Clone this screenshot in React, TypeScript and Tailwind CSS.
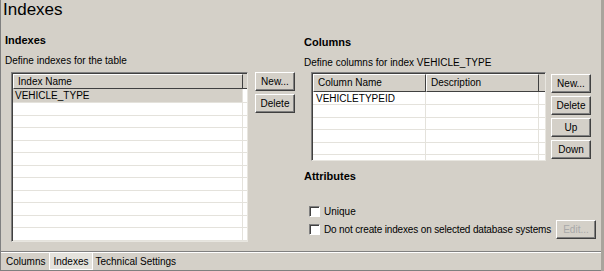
import React from "react";

const font = { fontFamily: '"Liberation Sans", Arial, sans-serif' };

function Btn({ label, disabled }: { label: string; disabled?: boolean }) {
  return (
    <div
      className={`w-[40px] h-[19px] flex items-center justify-center text-[10px] border border-t-white border-l-white border-r-[#404040] border-b-[#404040] shadow-[inset_-1px_-1px_0_#808080] ${
        disabled ? "text-[#a8a8a8]" : "text-black"
      }`}
    >
      {label}
    </div>
  );
}

function CheckBox() {
  return (
    <div className="w-[11px] h-[11px] shrink-0 bg-white border border-t-[#808080] border-l-[#808080] border-r-white border-b-white shadow-[inset_1px_1px_0_#404040]" />
  );
}

export default function App() {
  const leftRows = Array.from({ length: 11 });
  const rightRows = Array.from({ length: 5 });
  return (
    <div
      style={font}
      className="w-[604px] h-[271px] bg-[#d4d0c8] border-l border-l-[#808080] border-r-[3px] border-r-[#a8a49c] flex flex-col text-black overflow-hidden whitespace-nowrap"
    >
      <div className="h-[22px] pl-[2px] text-[17px] leading-[20px]">Indexes</div>
      <div className="flex flex-1">
        {/* Left panel */}
        <div className="w-[302px] pl-[4px] pt-[11px]">
          <div className="text-[11px] font-bold leading-[14px]">Indexes</div>
          <div className="mt-[7px] text-[10px] leading-[13px]">Define indexes for the table</div>
          <div className="mt-[5px] ml-[6px] flex gap-[7px]">
            <div className="w-[237px] h-[170px] bg-white border border-t-[#808080] border-l-[#808080] border-r-[#e8e6e0] border-b-[#e8e6e0] shadow-[inset_1px_1px_0_#404040] pl-[1px] pt-[1px] flex flex-col">
              <div className="flex h-[15px] bg-[#d4d0c8]">
                <div className="w-[230px] border border-t-white border-l-white border-r-[#404040] border-b-[#404040] text-[10px] leading-[13px] pl-[4px]">
                  Index Name
                </div>
                <div className="flex-1 border-b border-b-[#404040]" />
              </div>
              <div className="flex h-[14px] border-b border-b-[#e4e2dc]">
                <div className="w-[230px] bg-[#d4d0c8] text-[10px] leading-[14px] pl-[2px] border-r border-r-[#e4e2dc]">
                  VEHICLE_TYPE
                </div>
                <div className="flex-1" />
              </div>
              {leftRows.map((_, i) => (
                <div key={i} className="flex h-[12.5px] border-b border-b-[#e4e2dc]">
                  <div className="w-[230px] border-r border-r-[#e4e2dc]" />
                  <div className="flex-1" />
                </div>
              ))}
            </div>
            <div className="flex flex-col gap-[3px]">
              <Btn label="New..." />
              <Btn label="Delete" />
            </div>
          </div>
        </div>
        {/* Right panel */}
        <div className="flex-1 pt-[13px] pl-[1px]">
          <div className="text-[11px] font-bold leading-[14px]">Columns</div>
          <div className="mt-[7px] text-[10px] leading-[13px]">Define columns for index VEHICLE_TYPE</div>
          <div className="mt-[3px] ml-[7px] flex gap-[5px]">
            <div className="w-[235px] h-[89px] bg-white border border-t-[#808080] border-l-[#808080] border-r-[#e8e6e0] border-b-[#e8e6e0] shadow-[inset_1px_1px_0_#404040] pl-[1px] pt-[1px] flex flex-col overflow-hidden">
              <div className="flex h-[18px] shrink-0 bg-[#d4d0c8]">
                <div className="w-[113px] border border-t-white border-l-white border-r-[#404040] border-b-[#404040] text-[10px] leading-[15px] pl-[4px]">
                  Column Name
                </div>
                <div className="w-[113px] border border-t-white border-l-white border-r-[#404040] border-b-[#404040] text-[10px] leading-[15px] pl-[4px]">
                  Description
                </div>
                <div className="flex-1 border-b border-b-[#404040]" />
              </div>
              <div className="flex h-[13px] shrink-0 border-b border-b-[#e4e2dc]">
                <div className="w-[113px] text-[10px] leading-[13px] pl-[3px] border-r border-r-[#e4e2dc]">
                  VEHICLETYPEID
                </div>
                <div className="w-[113px] border-r border-r-[#e4e2dc]" />
                <div className="flex-1" />
              </div>
              {rightRows.map((_, i) => (
                <div key={i} className="flex h-[12.5px] shrink-0 border-b border-b-[#e4e2dc]">
                  <div className="w-[113px] border-r border-r-[#e4e2dc]" />
                  <div className="w-[113px] border-r border-r-[#e4e2dc]" />
                  <div className="flex-1" />
                </div>
              ))}
            </div>
            <div className="flex flex-col gap-[3px] pt-[2px]">
              <Btn label="New..." />
              <Btn label="Delete" />
              <Btn label="Up" />
              <Btn label="Down" />
            </div>
          </div>
          <div className="mt-[8px] text-[11px] font-bold leading-[14px]">Attributes</div>
          <div className="mt-[22px] ml-[5px] flex items-center gap-[4px] h-[13px]">
            <CheckBox />
            <span className="text-[10px]">Unique</span>
          </div>
          <div className="mt-[2px] ml-[5px] flex items-center gap-[4px]">
            <CheckBox />
            <span className="text-[10px] tracking-[-0.15px] w-[228px]">Do not create indexes on selected database systems</span>
            <Btn label="Edit..." disabled />
          </div>
        </div>
      </div>
      <div className="h-[20px] border-t border-t-[#808080] shadow-[inset_0_1px_0_white] flex items-center text-[10px] pl-[3px] border-b border-b-[#808080]">
        <div className="px-[2px] h-[18px] flex items-center">Columns</div>
        <div className="px-[3px] h-[18px] flex items-center bg-[#e4e2dc] border border-white ml-[2px]">Indexes</div>
        <div className="px-[2px] h-[18px] flex items-center ml-[1px]">Technical Settings</div>
      </div>
    </div>
  );
}
